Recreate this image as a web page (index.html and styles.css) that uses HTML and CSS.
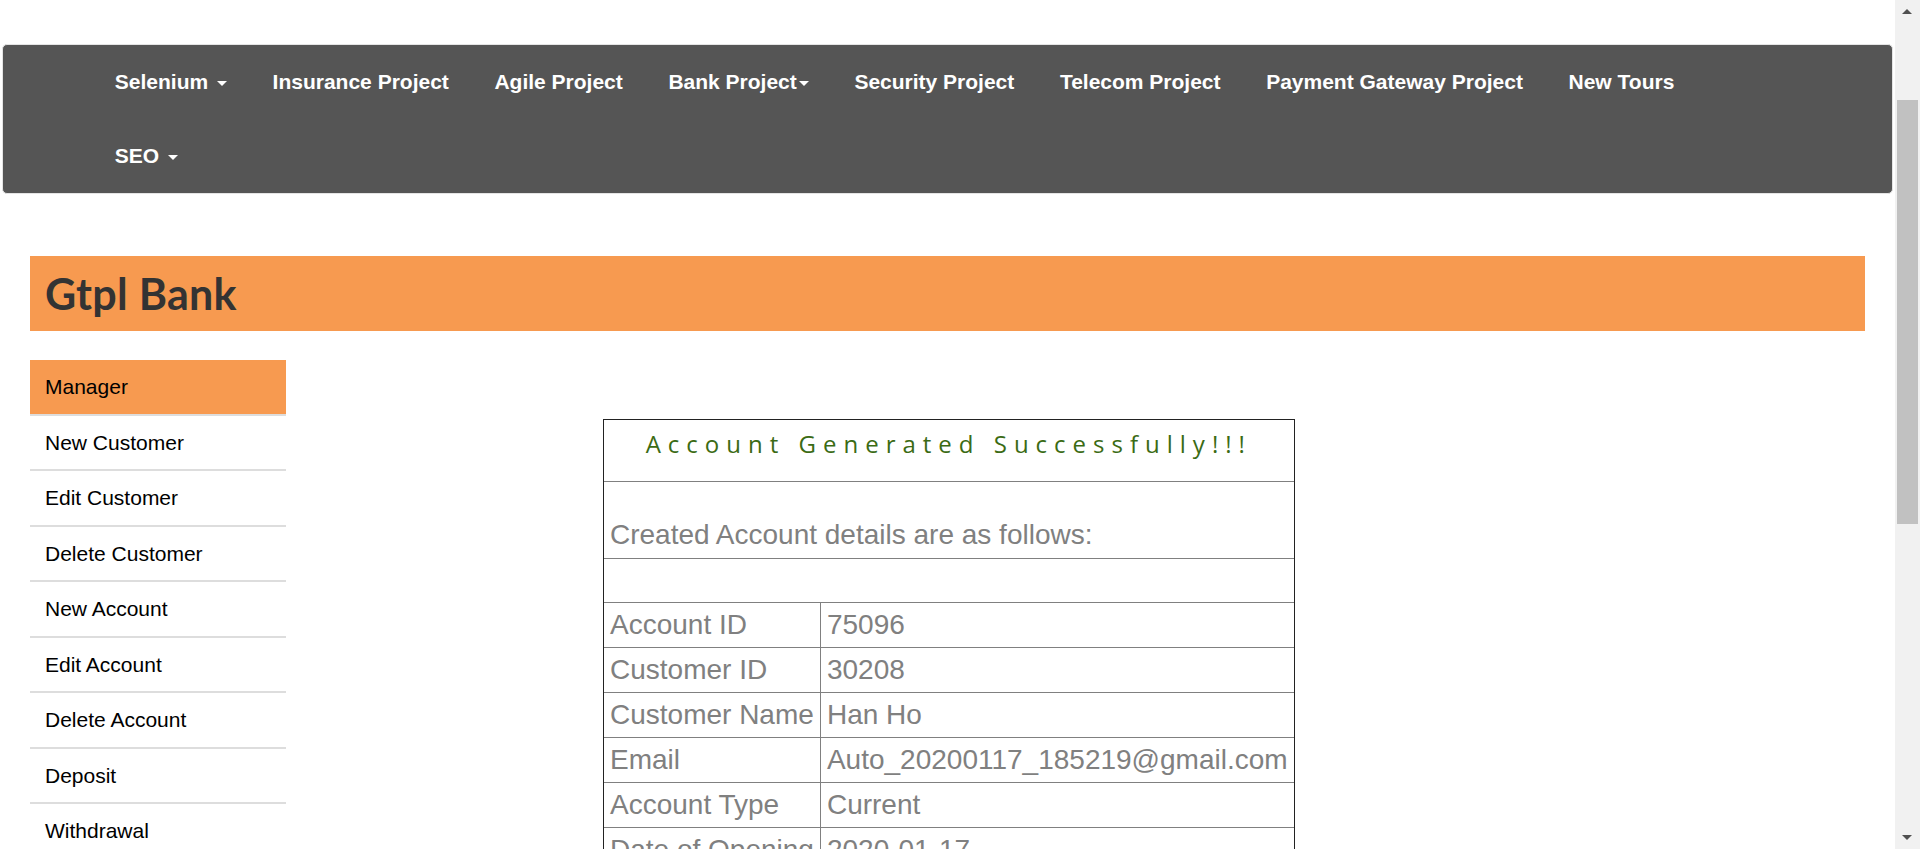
FILE: index.html
```html
<!DOCTYPE html>
<html lang="en">
<head>
<meta charset="utf-8">
<title>Gtpl Bank Manager HomePage</title>
<link rel="stylesheet" href="styles.css">
</head>
<body>
<nav class="navbar">
  <ul class="nav">
    <li><a href="#">Selenium <span class="caret"></span></a></li>
    <li><a href="#">Insurance Project</a></li>
    <li><a href="#">Agile Project</a></li>
    <li><a href="#">Bank Project<span class="caret tight"></span></a></li>
    <li><a href="#">Security Project</a></li>
    <li><a href="#">Telecom Project</a></li>
    <li><a href="#">Payment Gateway Project</a></li>
    <li><a href="#">New Tours</a></li>
    <li><a href="#">SEO <span class="caret"></span></a></li>
  </ul>
</nav>

<header class="bank-header">
  <h2 class="barone">Gtpl Bank</h2>
</header>

<div class="layout">
  <aside class="sidebar">
    <ul class="menusubnav">
      <li class="orange"><a href="#">Manager</a></li>
      <li><a href="#">New Customer</a></li>
      <li><a href="#">Edit Customer</a></li>
      <li><a href="#">Delete Customer</a></li>
      <li><a href="#">New Account</a></li>
      <li><a href="#">Edit Account</a></li>
      <li><a href="#">Delete Account</a></li>
      <li><a href="#">Deposit</a></li>
      <li><a href="#">Withdrawal</a></li>
      <li><a href="#">Fund Transfer</a></li>
      <li><a href="#">Change Password</a></li>
      <li><a href="#">Balance Enquiry</a></li>
      <li><a href="#">Mini Statement</a></li>
      <li><a href="#">Customised Statement</a></li>
      <li><a href="#">Log out</a></li>
    </ul>
  </aside>

  <main class="content">
    <table class="account">
      <tr class="title-row"><td colspan="2"><p class="heading3">Account Generated Successfully!!!</p></td></tr>
      <tr class="intro-row"><td colspan="2">Created Account details are as follows:</td></tr>
      <tr class="blank-row"><td colspan="2">&nbsp;</td></tr>
      <tr><td>Account ID</td><td>75096</td></tr>
      <tr><td>Customer ID</td><td>30208</td></tr>
      <tr><td>Customer Name</td><td>Han Ho</td></tr>
      <tr><td>Email</td><td>Auto_20200117_185219@gmail.com</td></tr>
      <tr><td>Account Type</td><td>Current</td></tr>
      <tr><td>Date of Opening</td><td>2020-01-17</td></tr>
      <tr><td>Current Amount</td><td>500</td></tr>
    </table>
  </main>
</div>

<div class="scrollbar" aria-hidden="true">
  <span class="sb-arrow up"></span>
  <span class="sb-thumb"></span>
  <span class="sb-arrow down"></span>
</div>
</body>
</html>
```

FILE: styles.css
```css
html {
  background: #fff;
}

body {
  margin: 0 25px 0 0;
  font-family: "Liberation Sans", Arial, sans-serif;
  padding-bottom: 420px;
}

/* window scrollbar (drawn over the right edge) */
.scrollbar {
  position: fixed;
  top: 0;
  right: 0;
  width: 25px;
  height: 100%;
  background: #f1f1f1;
}
.sb-thumb {
  position: absolute;
  left: 2px;
  right: 2px;
  top: 100px;
  height: 424px;
  background: #c1c1c1;
}
.sb-arrow {
  position: absolute;
  left: 7px;
  width: 0;
  height: 0;
  border-left: 5.5px solid transparent;
  border-right: 5.5px solid transparent;
}
.sb-arrow.up {
  top: 9px;
  border-bottom: 5px solid #505050;
}
.sb-arrow.down {
  bottom: 9px;
  border-top: 5px solid #505050;
}

/* top navigation */
.navbar {
  margin: 44px 2px 0;
  background: #555555;
  border: 1px solid #e4e4e4;
  border-radius: 5px;
}
.nav {
  list-style: none;
  margin: 0;
  padding: 0 140px 0 89px;
  display: flex;
  flex-wrap: wrap;
}
.nav li a {
  display: block;
  padding: 25px 22.8px 26px;
  line-height: 23px;
  font-size: 21px;
  font-weight: bold;
  color: #fff;
  text-decoration: none;
  white-space: nowrap;
}
.caret {
  display: inline-block;
  width: 0;
  height: 0;
  margin-left: 3px;
  vertical-align: middle;
  border-top: 5px solid #fff;
  border-left: 5px solid transparent;
  border-right: 5px solid transparent;
}
.caret.tight {
  margin-left: 2px;
}

/* bank header */
.bank-header {
  margin: 62px 30px 0;
  background: #f79a50;
  height: 75px;
  display: flex;
  align-items: center;
  padding: 0 15px;
}
.barone {
  margin: 0;
  font-family: Lato, "Noto Sans", sans-serif;
  font-weight: 700;
  font-size: 43px;
  letter-spacing: 0.3px;
  color: #333;
}

/* layout */
.layout {
  display: flex;
  align-items: flex-start;
  margin: 29px 30px 0;
}
.sidebar {
  width: 256px;
  flex: none;
}
.menusubnav {
  list-style: none;
  margin: 0;
  padding: 0;
}
.menusubnav li {
  border-bottom: 2px solid #dddddd;
}
.menusubnav li a {
  display: block;
  padding: 14px 15px 14.5px;
  line-height: 25px;
  font-size: 21px;
  color: #000;
  text-decoration: none;
}
.menusubnav li.orange {
  background: #f79a50;
}

/* content table */
.content {
  flex: 1;
  padding-left: 317px;
  padding-top: 59px;
}
.account {
  border: 1px solid #222;
  border-collapse: separate;
  border-spacing: 0;
  font-size: 28px;
  color: #808080;
}
.account td {
  padding: 0 6px;
  line-height: 44px;
  white-space: nowrap;
}
.account tr + tr td {
  border-top: 1px solid #808080;
}
.account td + td {
  border-left: 1px solid #808080;
}
.title-row td {
  text-align: center;
  padding: 7px 0 21px;
  line-height: 33px;
}
.heading3 {
  margin: 0;
  font-family: "Open Sans", "Noto Sans", sans-serif;
  font-size: 24px;
  font-weight: 500;
  letter-spacing: 7px;
  color: #3b6b14;
}
.intro-row td {
  padding: 37px 6px 7px;
  line-height: 32px;
}
.blank-row td {
  line-height: 43px;
}
```
